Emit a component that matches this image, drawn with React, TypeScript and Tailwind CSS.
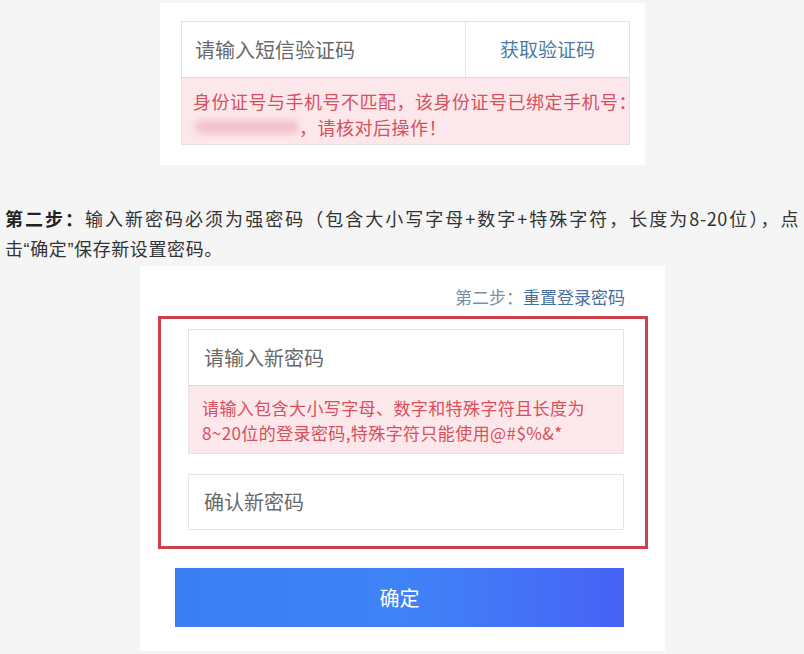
import React from "react";

const cjk = { fontFamily: '"Noto Sans CJK SC", "Noto Sans", "Liberation Sans", sans-serif' };

export default function App() {
  return (
    <div className="w-[804px] h-[654px] overflow-hidden bg-[#f5f5f5] flex flex-col" style={cjk}>
      {/* Panel 1 */}
      <div className="ml-[160px] mt-[3px] w-[485px] h-[162px] bg-white pt-[18px] pl-[21px]">
        <div className="w-[449px] border border-[#e2e2e2]">
          <div className="flex h-[55px] items-center">
            <div className="flex-1 pl-[13px] text-[20px] text-[#6a6a6a]">请输入短信验证码</div>
            <div className="w-px h-full bg-[#e6e6e6]" />
            <div className="w-[163px] text-center text-[19px] text-[#4f7aa3]">获取验证码</div>
          </div>
          <div className="bg-[#fce7ea] border-t border-[#efd2d6] h-[67px] pl-[11px] pt-[10px] text-[18px] leading-[26px] tracking-[0.5px] text-[#d6505d]">
            <div className="whitespace-nowrap">身份证号与手机号不匹配，该身份证号已绑定手机号：</div>
            <div className="flex items-center whitespace-nowrap">
              <span className="inline-block w-[104px] h-[14px] ml-[2px] rounded-full bg-[#f2c3cb] blur-[3px]" />
              <span>，请核对后操作！</span>
            </div>
          </div>
        </div>
      </div>

      {/* Paragraph */}
      <div className="mt-[38px] px-[5px] text-[18px] leading-[30px] text-[#333] tracking-[0.6px]">
        <div className="h-[30px] text-justify [text-align-last:justify]">
          <span className="font-bold text-[#222]">第二步：</span>输入新密码必须为强密码（包含大小写字母+数字+特殊字符，长度为8-20位），点
        </div>
        <div className="h-[30px]">
          击<span style={{ fontFamily: '"Liberation Sans", sans-serif' }}>“</span>确定<span style={{ fontFamily: '"Liberation Sans", sans-serif' }}>”</span>保存新设置密码。
        </div>
      </div>

      {/* Panel 2 */}
      <div className="ml-[140px] mt-[3px] w-[525px] h-[385px] bg-white pt-[19px]">
        <div className="w-[485px] text-right text-[17px] leading-[24px]">
          <span className="text-[#7890ac]">第二步：</span>
          <span className="text-[#466f9e]">重置登录密码</span>
        </div>
        <div className="ml-[18px] mt-[7px] w-[490px] h-[233px] border-[3px] border-[#cd424a] pt-[10px] pl-[27px]">
          <div className="w-[436px] border border-[#e4e4e4]">
            <div className="h-[55px] flex items-center pl-[15px] text-[20px] text-[#6a6a6a]">请输入新密码</div>
            <div className="bg-[#fce7ea] border-t border-[#efd2d6] h-[68px] pl-[13px] pt-[9px] text-[17px] leading-[25px] tracking-[0.4px] text-[#d6505d]">
              <div className="whitespace-nowrap">请输入包含大小写字母、数字和特殊字符且长度为</div>
              <div className="whitespace-nowrap">8~20位的登录密码,特殊字符只能使用@#$%&amp;*</div>
            </div>
          </div>
          <div className="mt-[20px] w-[436px] h-[56px] border border-[#e4e4e4] flex items-center pl-[15px] text-[20px] text-[#6a6a6a]">
            确认新密码
          </div>
        </div>
        <div className="ml-[35px] mt-[19px] w-[449px] h-[59px] bg-gradient-to-r from-[#3a7ef1] via-[#3f83f7] to-[#4762f5] flex items-center justify-center text-white text-[20px]">
          确定
        </div>
      </div>
    </div>
  );
}
